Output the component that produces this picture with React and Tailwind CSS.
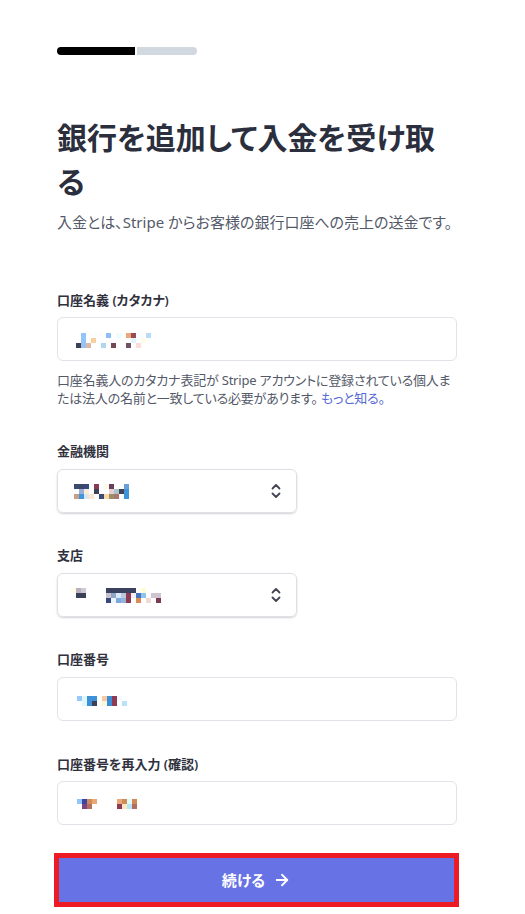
import React from 'react';
import { ArrowRight } from 'lucide-react';

// blurred values, drawn as 5px mosaic cells [col, row, colour]
const nameCells = [
  [1, 0, '#93c5f8'], [6, 0, '#8fbdf5'], [8, 0, '#eefbff'], [10, 0, '#e9a97a'], [11, 0, '#9e4a55'], [14, 0, '#b7dcf7'],
  [1, 1, '#93c5f8'], [3, 1, '#f7cfa0'], [11, 1, '#dff5fb'], [13, 1, '#fffde9'],
  [0, 2, '#3b4257'], [1, 2, '#99c2ee'], [2, 2, '#dcb8a8'], [5, 2, '#b0d6f0'], [7, 2, '#744857'], [10, 2, '#6e5266'], [12, 2, '#fbdcd8'],
];

const bankCells = [
  [0, 0, '#3b4a70'], [1, 0, '#3d4766'], [2, 0, '#3a4a80'], [4, 0, '#8a3a56'], [6, 0, '#fffbe8'], [7, 0, '#6a3f5c'], [10, 0, '#6a9fd8'],
  [1, 1, '#9ab0da'], [2, 1, '#fbecd9'], [4, 1, '#3e4257'], [7, 1, '#e8cfd3'], [8, 1, '#a9c5cc'], [9, 1, '#3e4355'], [10, 1, '#3f93d8'],
  [0, 2, '#c8a088'], [1, 2, '#3e95d8'], [2, 2, '#d9e6f7'], [3, 2, '#fde6cd'], [5, 2, '#3b4a78'], [6, 2, '#f8d9a0'], [7, 2, '#9e8e68'], [8, 2, '#a9786e'], [10, 2, '#3c94d8'],
];

const branchCells = [
  [0, 0, '#fffde8'], [1, 0, '#b9b0c0'], [2, 0, '#cfc8d5'],
  [7, 0, '#3a4260'], [8, 0, '#3a4260'], [9, 0, '#3a4260'], [10, 0, '#3a4260'], [11, 0, '#3a4260'], [12, 0, '#3a4260'], [14, 0, '#fffbd5'],
  [1, 1, '#3a4058'], [2, 1, '#3a4058'], [7, 1, '#c8c0cc'], [8, 1, '#8ca7c8'], [9, 1, '#dbe7fb'], [10, 1, '#b9c7e0'], [11, 1, '#8e3a55'],
  [12, 1, '#f4f0f4'], [13, 1, '#4a74c0'], [14, 1, '#8fc4f0'], [16, 1, '#d0c4d0'], [17, 1, '#d0c4d0'],
  [7, 2, '#3a4680'], [8, 2, '#f0f4fc'], [9, 2, '#78aae0'], [10, 2, '#96b4d8'], [11, 2, '#8a3a55'], [13, 2, '#d88c58'], [15, 2, '#efdcd0'], [17, 2, '#7a3a52'],
];

const accountCells = [
  [0, 0, '#9ac8f8'], [1, 0, '#dff8fb'], [2, 0, '#4090d8'], [3, 0, '#4090d8'], [5, 0, '#f8c8a0'], [6, 0, '#3b8fd8'], [7, 0, '#8e3a55'], [8, 0, '#f4fbff'],
  [1, 1, '#dff8fb'], [2, 1, '#4090d8'], [3, 1, '#3b4257'], [5, 1, '#fff8d8'], [6, 1, '#3b8fd8'], [7, 1, '#8e3a55'], [9, 1, '#b8e4fb'],
];

const confirmCells = [
  [0, 0, '#93c5f8'], [1, 0, '#3b44a0'], [2, 0, '#d08a58'], [3, 0, '#e9a878'],
  [8, 0, '#e9a878'], [9, 0, '#d08a58'], [10, 0, '#e0fbf5'], [11, 0, '#d08a58'],
  [1, 1, '#7a4580'], [2, 1, '#b07060'], [8, 1, '#8e3a55'], [9, 1, '#fde8c0'], [10, 1, '#b8e4f8'], [11, 1, '#b07060'],
];

const Mosaic = ({ cells }) => {
  const cols = Math.max(...cells.map(c => c[0])) + 1;
  const rows = Math.max(...cells.map(c => c[1])) + 1;
  return (
    <svg width={cols * 5} height={rows * 5} shapeRendering="crispEdges" className="block">
      {cells.map(([c, r, fill], i) => (
        <rect key={i} x={c * 5} y={r * 5} width="5" height="5" fill={fill} />
      ))}
    </svg>
  );
};

const UpDown = () => (
  <svg width="10" height="18" viewBox="0 0 10 18" fill="none" stroke="#414552" strokeWidth="1.8" strokeLinecap="round" strokeLinejoin="round">
    <path d="M1.5 6.5 L5 3 L8.5 6.5" />
    <path d="M1.5 11.5 L5 15 L8.5 11.5" />
  </svg>
);

const Label = ({ children }) => (
  <div className="text-[13px] leading-[20px] font-semibold text-[#30313d]">{children}</div>
);

export default function App() {
  return (
    <div className="min-h-screen bg-white font-['Noto_Sans','Noto_Sans_CJK_JP',sans-serif] [font-feature-settings:'palt'] pl-[57px] pt-[47px] pb-[7px]">
      <div className="w-[400px]">
        {/* progress */}
        <div className="flex gap-[2px] w-[140px]">
          <div className="h-[8px] w-[78px] bg-black rounded-l-full" />
          <div className="h-[8px] w-[60px] bg-[#d1d8df] rounded-r-full" />
        </div>

        <h1 className="mt-[61px] text-[30px] leading-[44px] font-semibold text-[#2b2f3d]">
          銀行を追加して入金を受け取る
        </h1>
        <p className="mt-[6px] text-[15px] leading-[24px] text-[#545969]">
          入金とは、Stripe からお客様の銀行口座への売上の送金です。
        </p>

        {/* account holder */}
        <div className="mt-[56px]">
          <Label>口座名義 (カタカナ)</Label>
          <div className="mt-[7px] h-[44px] rounded-[6px] border border-[#e0e3e8] pl-[18px] pt-[15px]">
            <Mosaic cells={nameCells} />
          </div>
          <p className="mt-[10px] text-[13px] leading-[18px] tracking-[-0.2px] text-[#545969]">
            口座名義人のカタカナ表記が Stripe アカウントに登録されている個人または法人の名前と一致している必要があります。 <span className="text-[#5469d4]">もっと知る。</span>
          </p>
        </div>

        {/* bank */}
        <div className="mt-[34px]">
          <Label>金融機関</Label>
          <div className="mt-[8px] w-[240px] h-[44px] rounded-[6px] border border-[#dde1e6] shadow-[0_1px_2px_rgba(0,0,0,0.18)] flex items-center justify-between pl-[16px] pr-[15px]">
            <Mosaic cells={bankCells} />
            <UpDown />
          </div>
        </div>

        {/* branch */}
        <div className="mt-[32px]">
          <Label>支店</Label>
          <div className="mt-[8px] w-[240px] h-[44px] rounded-[6px] border border-[#dde1e6] shadow-[0_1px_2px_rgba(0,0,0,0.18)] flex items-center justify-between pl-[13px] pr-[15px]">
            <Mosaic cells={branchCells} />
            <UpDown />
          </div>
        </div>

        {/* account number */}
        <div className="mt-[32px]">
          <Label>口座番号</Label>
          <div className="mt-[8px] h-[44px] rounded-[6px] border border-[#e0e3e8] pl-[19px] pt-[18px]">
            <Mosaic cells={accountCells} />
          </div>
        </div>

        <div className="mt-[33px]">
          <Label>口座番号を再入力 (確認)</Label>
          <div className="mt-[7px] h-[44px] rounded-[6px] border border-[#e0e3e8] pl-[19px] pt-[17px]">
            <Mosaic cells={confirmCells} />
          </div>
        </div>

        {/* continue, with the red highlight frame */}
        <div className="mt-[28px] -ml-[3px] w-[405px] border-[5px] border-[#ed1c24]">
          <button className="w-full h-[44px] bg-[#6772e5] flex items-center justify-center gap-[8px] text-white text-[15px] font-semibold">
            続ける
            <ArrowRight size={18} strokeWidth={2.5} />
          </button>
        </div>
      </div>
    </div>
  );
}
